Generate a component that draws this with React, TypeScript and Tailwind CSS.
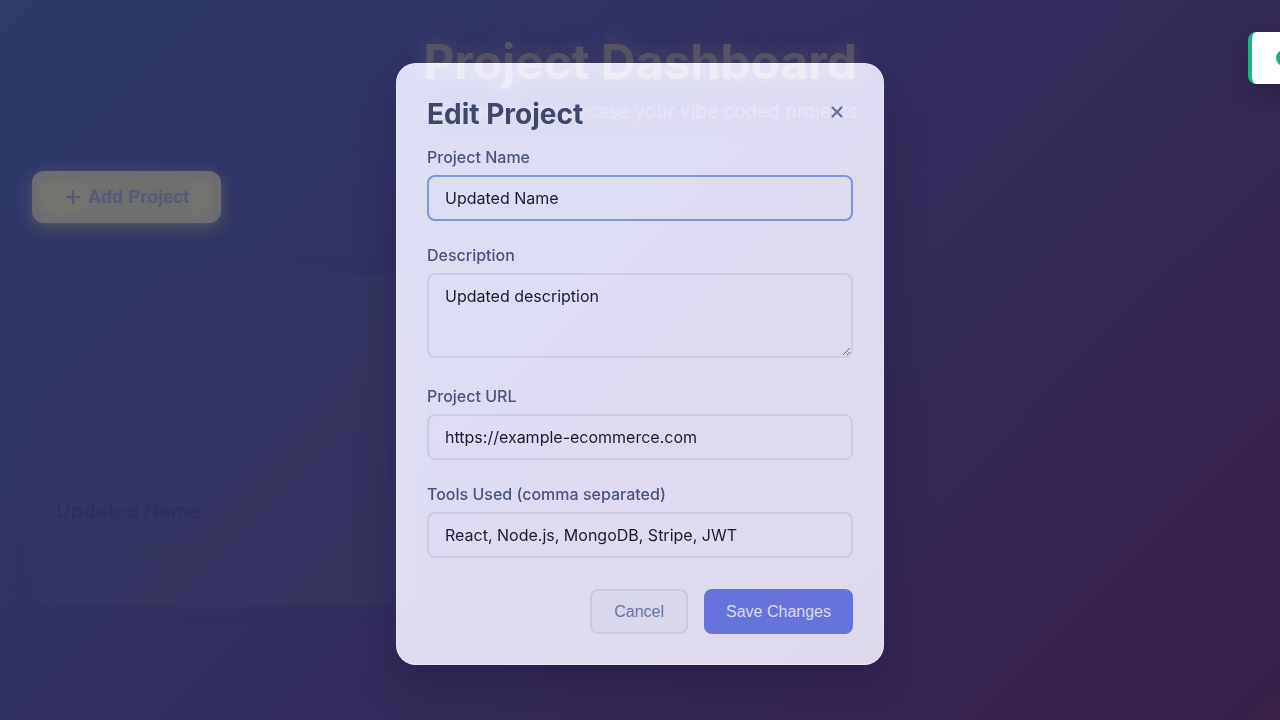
import React from "react";
import { FaCircleCheck, FaPlus, FaXmark } from "react-icons/fa6";

const fieldClass =
  "block w-full rounded-lg border-2 border-[#cdcbe2] bg-transparent px-4 text-base text-[#1c1a33] outline-none focus:border-[#8291e8]";
const labelClass = "mb-2 block text-base leading-5 font-medium text-[#4a5478]";

function Dashboard() {
  return (
    <main className="p-8">
      <header className="text-center">
        <h1 className="text-5xl leading-[60px] font-bold text-[#575565] [text-shadow:0_0_20px_rgba(110,105,110,0.6)]">
          Project Dashboard
        </h1>
        <p className="mt-1.5 text-[19px] leading-7 text-[#474467] [text-shadow:0_0_20px_rgba(80,70,130,0.6)]">
          Manage and showcase your vibe coded projects
        </p>
      </header>
      <button
        type="button"
        className="mt-[45px] flex h-[52px] items-center gap-1.5 rounded-xl bg-[#757570] px-8 font-['Liberation_Sans',sans-serif] text-lg font-bold text-[#565a74] shadow-[0_4px_16px_rgba(117,117,100,0.6),inset_0_0_20px_rgba(88,88,120,0.6)] [text-shadow:0_0_10px_rgba(80,90,125,0.6)]"
      >
        <FaPlus className="size-[18px]" />
        Add Project
      </button>
      <div className="mt-[52px] grid grid-cols-3 gap-8">
        <article className="rounded-2xl bg-[#3a3a60]/30 shadow-[0_0_16px_rgba(58,58,96,0.4)]">
          <div className="flex h-[200px] items-center justify-center">
            <div className="size-14 rounded-full bg-[#333160]/40 shadow-[0_0_12px_rgba(51,49,96,0.4)]" />
          </div>
          <div className="px-6 pt-[22px] pb-12">
            <h2 className="text-xl leading-7 font-bold text-[#302f5c]">Updated Name</h2>
            <p className="mt-2 text-base leading-6 text-[#32315c]">Updated description</p>
          </div>
        </article>
      </div>
    </main>
  );
}

function EditDialog() {
  return (
    <div className="fixed inset-0 flex items-center justify-center p-4 pt-6">
      <section
        role="dialog"
        aria-labelledby="dialog-title"
        className="w-full max-w-[488px] rounded-[20px] border border-white/30 bg-[#fcfcff]/80 p-[30px] shadow-[0_20px_40px_rgba(30,20,50,0.35)] backdrop-brightness-200"
      >
        <div className="mb-[13px] flex items-start justify-between">
          <h2 id="dialog-title" className="text-[28px] leading-10 font-bold text-[#3f486c]">
            Edit Project
          </h2>
          <button type="button" aria-label="Close" className="flex size-8 items-center justify-center pt-1 text-[#65719a]">
            <FaXmark className="size-[18px]" />
          </button>
        </div>
        <form>
          <div className="mb-6">
            <label htmlFor="name" className={labelClass}>Project Name</label>
            <input id="name" autoFocus defaultValue="Updated Name" className={`${fieldClass} h-[46px]`} />
          </div>
          <div className="mb-7">
            <label htmlFor="description" className={labelClass}>Description</label>
            <textarea
              id="description"
              defaultValue="Updated description"
              className={`${fieldClass} h-[85px] resize-y py-[9px]`}
            />
          </div>
          <div className="mb-6">
            <label htmlFor="url" className={labelClass}>Project URL</label>
            <input id="url" type="url" defaultValue="https://example-ecommerce.com" className={`${fieldClass} h-[46px]`} />
          </div>
          <div className="mb-[31px]">
            <label htmlFor="tools" className={labelClass}>Tools Used (comma separated)</label>
            <input id="tools" defaultValue="React, Node.js, MongoDB, Stripe, JWT" className={`${fieldClass} h-[46px]`} />
          </div>
          <div className="flex justify-end gap-4 font-['Liberation_Sans',sans-serif] text-base">
            <button type="button" className="h-[45px] rounded-lg border-2 border-[#c9c9e4] bg-[#d8d7ec] px-[22px] text-[#6a749c]">
              Cancel
            </button>
            <button type="submit" className="h-[45px] rounded-lg bg-[#6673dc] px-[22px] text-[#dcdaf3]">
              Save Changes
            </button>
          </div>
        </form>
      </section>
    </div>
  );
}

function Toast() {
  return (
    <div
      role="status"
      className="fixed top-8 left-[calc(100%-32px)] flex h-[52px] w-80 items-center rounded-lg border-l-4 border-[#10b981] bg-white px-6 shadow-[0_8px_24px_rgba(0,0,0,0.2)]"
    >
      <FaCircleCheck className="size-4 text-[#10b981]" />
    </div>
  );
}

export default function App() {
  return (
    <div className="min-h-screen overflow-hidden bg-linear-[135deg,#2e3a6c_0%,#322d5e_50%,#382046_100%] font-['Inter',sans-serif]">
      <Dashboard />
      <EditDialog />
      <Toast />
    </div>
  );
}
